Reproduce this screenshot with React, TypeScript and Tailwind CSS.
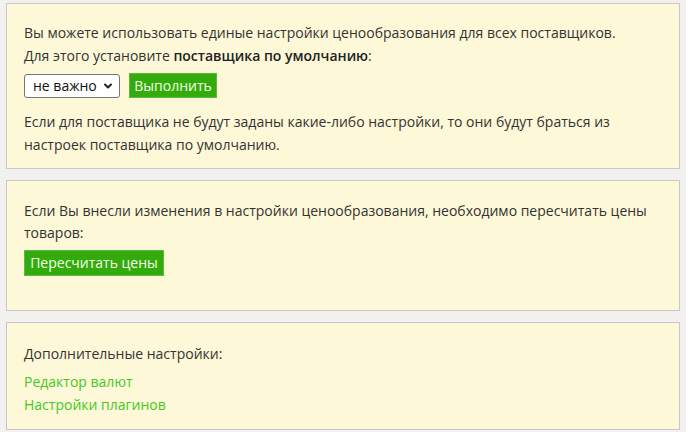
import { ChevronDown } from 'lucide-react';

export default function App() {
  const box = 'mx-[6px] border border-[#c8c8c8] bg-[#fdf8d8] px-[17px]';

  return (
    <div
      className="min-h-[432px] w-[686px] bg-[#f2f1f0] pt-[3px] pb-[3px] text-[14px] leading-[23px] text-[#333333]"
      style={{ fontFamily: '"Open Sans", "Noto Sans", Arial, sans-serif' }}
    >
      {/* Поставщик по умолчанию */}
      <div className={`${box} h-[166px] pt-[17px]`}>
        <p>
          Вы можете использовать единые настройки ценообразования для всех поставщиков.
          <br />
          Для этого установите <b className="font-semibold text-[#222]">поставщика по умолчанию</b>:
        </p>
        <div className="mt-[6px] flex items-center gap-[9px]">
          <div className="relative h-[24px] w-[96px]">
            <select className="h-full w-full appearance-none rounded-[3px] border border-[#767676] bg-white pl-[8px] text-[14px] leading-[22px] text-[#111]">
              <option>не важно</option>
            </select>
            <ChevronDown
              className="pointer-events-none absolute right-[6px] top-[6px] h-[12px] w-[12px] text-[#222]"
              strokeWidth={4}
            />
          </div>
          <button className="h-[25px] w-[88px] border border-[#5fb844] bg-[#34ab0c] text-center text-[14px] leading-[22px] text-[#f6ffe8]">
            Выполнить
          </button>
        </div>
        <p className="mt-[12px]">
          Если для поставщика не будут заданы какие-либо настройки, то они будут браться из
          настроек поставщика по умолчанию.
        </p>
      </div>

      {/* Пересчёт цен */}
      <div className={`${box} mt-[11px] h-[131px] pt-[19px]`}>
        <p className="leading-[22px]">
          Если Вы внесли изменения в настройки ценообразования, необходимо пересчитать цены
          товаров:
        </p>
        <button className="mt-[6px] h-[26px] w-[140px] border border-[#5fb844] bg-[#34ab0c] text-center text-[14px] leading-[22px] text-[#f6ffe8]">
          Пересчитать цены
        </button>
      </div>

      {/* Дополнительно */}
      <div className={`${box} mt-[11px] h-[108px] pt-[19px]`}>
        <p>Дополнительные настройки:</p>
        <div className="mt-[5px] flex flex-col items-start">
          <a href="#" className="text-[#45c823]">Редактор валют</a>
          <a href="#" className="text-[#45c823]">Настройки плагинов</a>
        </div>
      </div>
    </div>
  );
}
